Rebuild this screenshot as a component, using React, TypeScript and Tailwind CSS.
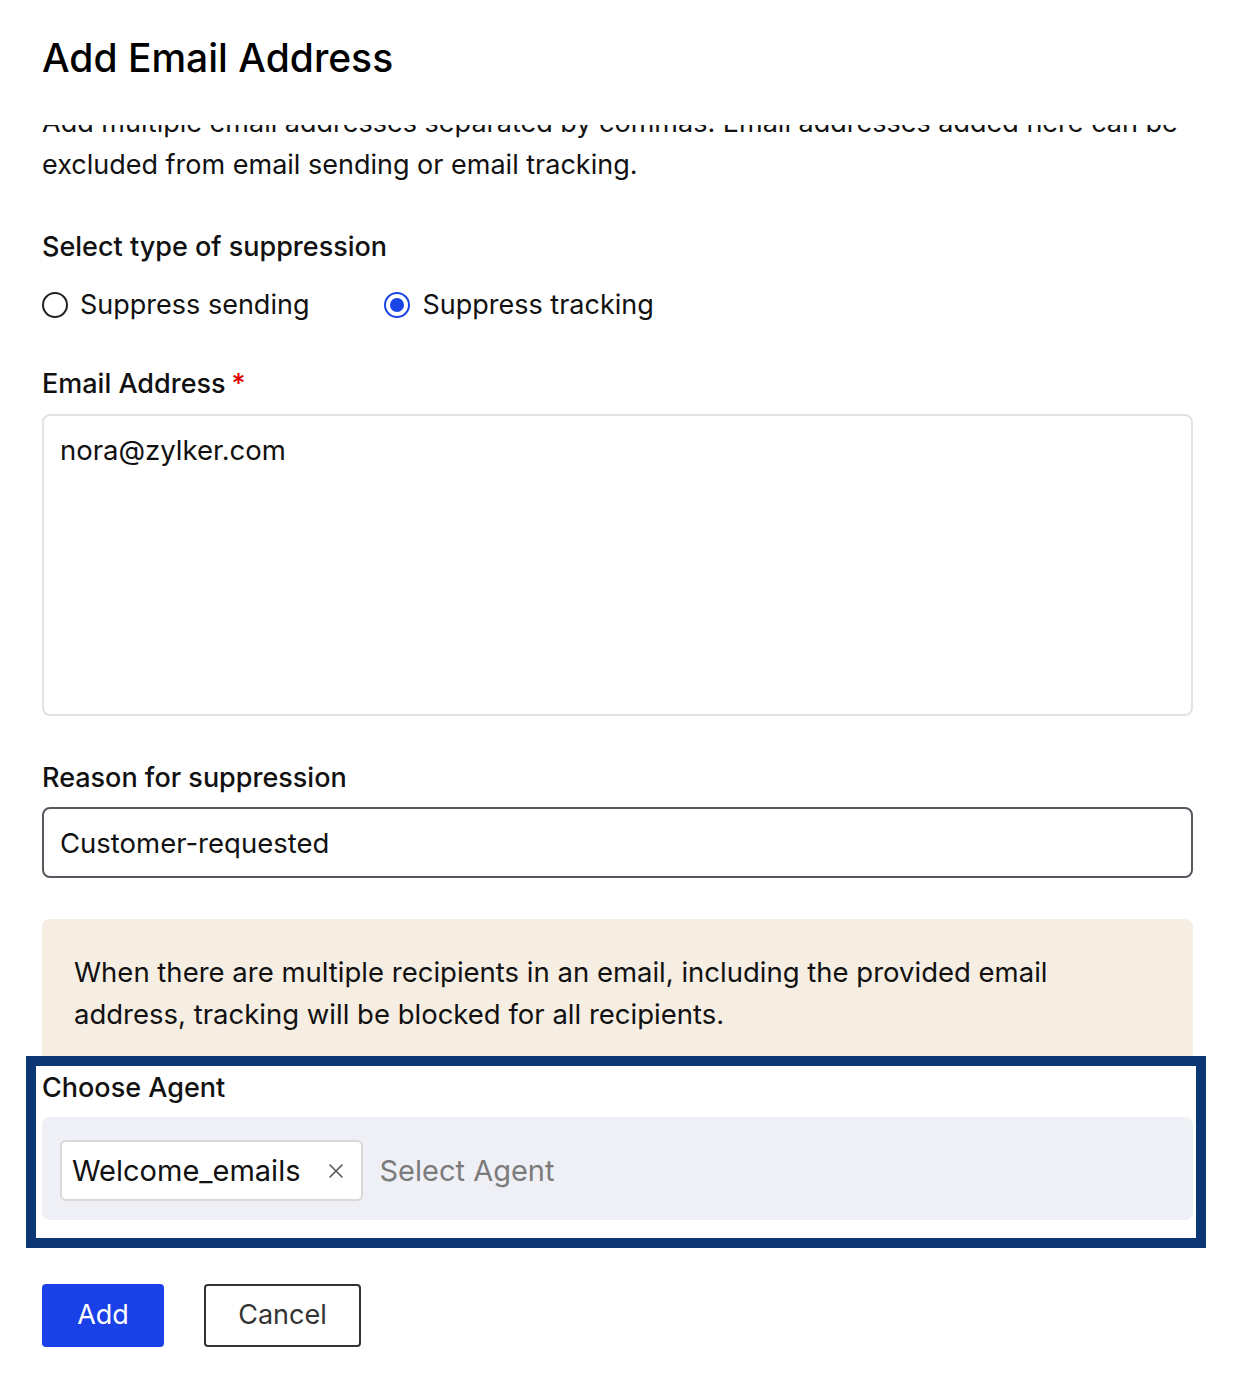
import React from "react";

function Radio({ checked, label }: { checked: boolean; label: string }) {
  return (
    <label className="flex items-center gap-[12px]">
      {checked ? (
        <span className="flex h-[26px] w-[26px] items-center justify-center rounded-full border-[2px] border-[#1a44e8]">
          <span className="h-[14px] w-[14px] rounded-full bg-[#1a44e8]" />
        </span>
      ) : (
        <span className="h-[26px] w-[26px] rounded-full border-[2px] border-[#222]" />
      )}
      <span>{label}</span>
    </label>
  );
}

export default function App() {
  return (
    <div
      className="relative h-[1384px] w-[1240px] overflow-hidden bg-white text-[27px] text-[#111]"
      style={{ fontFamily: "Inter, 'Noto Sans', sans-serif" }}
    >
      <div className="relative z-10 h-[125px] bg-white px-[42px] pt-[35px]">
        <h1 className="text-[39px] font-medium leading-[46px] text-black">Add Email Address</h1>
      </div>

      <div className="-mt-[23px] px-[42px]">
        <p className="whitespace-nowrap leading-[42px]">
          Add multiple email addresses separated by commas. Email addresses added here can be
          <br />
          excluded from email sending or email tracking.
        </p>

        <div className="mt-[43px] font-medium leading-[36px]">Select type of suppression</div>
        <div className="mt-[22px] flex gap-[75px] leading-[36px]">
          <Radio checked={false} label="Suppress sending" />
          <Radio checked={true} label="Suppress tracking" />
        </div>

        <div className="mt-[43px] font-medium leading-[36px]">
          Email Address<span className="ml-[6px] text-[#e00000]">*</span>
        </div>
        <div className="mt-[12px] h-[302px] w-[1151px] rounded-[8px] border-[2px] border-[#e2e2e2] px-[16px] pt-[16px] text-[27.5px] leading-[36px]">
          nora@zylker.com
        </div>

        <div className="mt-[44px] font-medium leading-[36px]">Reason for suppression</div>
        <div className="mt-[11px] flex h-[71px] w-[1151px] items-center rounded-[8px] border-[2px] border-[#55585e] px-[16px] text-[27.5px] leading-[36px]">
          Customer-requested
        </div>

        <div className="mt-[41px] w-[1151px] rounded-t-[8px] bg-[#f6ede3] px-[32px] pb-[30px] pt-[32px] text-[27.5px] leading-[42px]">
          When there are multiple recipients in an email, including the provided email
          <br />
          address, tracking will be blocked for all recipients.
        </div>

        <div className="mt-[5px] font-medium leading-[36px]">Choose Agent</div>
        <div className="mt-[11px] flex h-[103px] w-[1151px] items-center gap-[16px] rounded-[8px] bg-[#eff0f5] px-[18px] pt-[4px] text-[29px]">
          <div className="flex h-[61px] items-center gap-[28px] rounded-[6px] border-[2px] border-[#d8d8d8] bg-white pl-[10px] pr-[17px]">
            <span>Welcome_emails</span>
            <svg width="16" height="16" viewBox="0 0 16 16" className="text-[#555]">
              <path d="M2 2L14 14M14 2L2 14" stroke="currentColor" strokeWidth="1.6" strokeLinecap="round" />
            </svg>
          </div>
          <span className="text-[#7b7b7b]">Select Agent</span>
        </div>

        <div className="mt-[64px] flex gap-[40px]">
          <button className="flex h-[63px] w-[122px] items-center justify-center rounded-[4px] bg-[#1a40e8] text-white">
            Add
          </button>
          <button className="flex h-[63px] w-[157px] items-center justify-center rounded-[4px] border-[2px] border-[#333] text-[#333]">
            Cancel
          </button>
        </div>
      </div>

      <div className="pointer-events-none absolute left-[26px] top-[1056px] h-[192px] w-[1180px] border-[10px] border-[#0c3772]" />
    </div>
  );
}
